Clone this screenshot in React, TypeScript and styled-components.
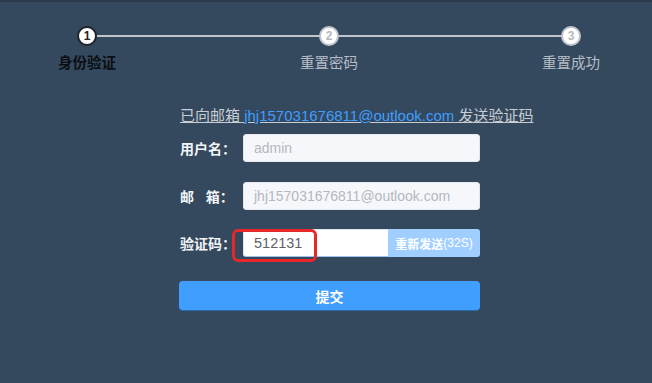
import styled, { createGlobalStyle } from 'styled-components';

const GlobalStyle = createGlobalStyle`
  html, body {
    margin: 0;
    padding: 0;
    background: #34495e;
  }
  * {
    box-sizing: border-box;
  }
`;

const Page = styled.div`
  width: 652px;
  height: 383px;
  background: #34495e;
  border-top: 2px solid #2a3a4b;
  font-family: "Liberation Sans", "Noto Sans CJK SC", sans-serif;
  overflow: hidden;
`;

const Steps = styled.div`
  display: grid;
  grid-template-columns: 60px 1fr 60px 1fr 60px;
  padding: 24px 51px 0 57px;
  align-items: center;
`;

const StepIcon = styled.div<{ $active?: boolean }>`
  justify-self: center;
  width: 20px;
  height: 20px;
  border-radius: 50%;
  background: #fff;
  border: 2px solid ${(p) => (p.$active ? '#1f2329' : '#c0c4cc')};
  color: ${(p) => (p.$active ? '#1f2329' : '#b4b9c1')};
  font-size: 12px;
  font-weight: bold;
  display: flex;
  align-items: center;
  justify-content: center;
  position: relative;
  z-index: 1;
`;

const Connector = styled.div`
  height: 2px;
  background: #c0c4cc;
  margin: 0 -21px;
`;

const StepTitle = styled.div<{ $active?: boolean }>`
  justify-self: center;
  white-space: nowrap;
  margin-top: 8px;
  line-height: 18px;
  font-size: 14.5px;
  font-weight: ${(p) => (p.$active ? 'bold' : 'normal')};
  color: ${(p) => (p.$active ? '#0b0f14' : '#b6bcc6')};
`;

const Form = styled.div`
  width: 301px;
  margin: 34px 0 0 179px;
`;

const Notice = styled.div`
  font-size: 15px;
  line-height: 20px;
  color: #c9cdd3;
  text-decoration: underline;
  white-space: nowrap;
  margin-left: 1px;
`;

const Email = styled.span`
  color: #409eff;
`;

const Row = styled.div<{ $gap: number }>`
  display: flex;
  align-items: center;
  margin-top: ${(p) => p.$gap}px;
  height: 28px;
`;

const Label = styled.label`
  width: 64px;
  padding-left: 1px;
  font-size: 14px;
  font-weight: bold;
  color: #f2f4f7;
  white-space: nowrap;
`;

const Input = styled.div<{ $disabled?: boolean }>`
  flex: 1;
  height: 28px;
  display: flex;
  align-items: center;
  padding-left: 10px;
  font-size: 14px;
  border-radius: 3px;
  border: 1px solid ${(p) => (p.$disabled ? '#e4e7ed' : '#dfe7f1')};
  background: ${(p) => (p.$disabled ? '#f5f7fa' : '#fff')};
  color: ${(p) => (p.$disabled ? '#b4b8bf' : '#606266')};
`;

const Group = styled.div`
  flex: 1;
  display: flex;
  height: 28px;
  position: relative;
`;

const CodeInput = styled(Input)`
  border-radius: 3px 0 0 3px;
  border-right: none;
  border-bottom-color: #9cc3ec;
  font-size: 14.5px;
`;

const Append = styled.div`
  width: 92px;
  display: flex;
  align-items: center;
  justify-content: center;
  background: #a0cfff;
  color: #fff;
  font-size: 12px;
  font-weight: bold;
  border-radius: 0 3px 3px 0;
  white-space: nowrap;
`;

const Countdown = styled.span`
  font-weight: normal;
`;

const Mark = styled.div`
  position: absolute;
  left: -11px;
  top: 0;
  width: 85px;
  height: 33px;
  border: 3px solid #e8272a;
  border-radius: 6px;
  pointer-events: none;
`;

const Submit = styled.button`
  width: 301px;
  height: 29px;
  margin-top: 24px;
  border: none;
  border-radius: 4px;
  background: #409eff;
  box-shadow: 0 1px 0 #2b6aa8;
  color: #fff;
  font-family: inherit;
  font-size: 14px;
  font-weight: bold;
  cursor: pointer;
`;

const steps = [
  { n: 1, title: '身份验证' },
  { n: 2, title: '重置密码' },
  { n: 3, title: '重置成功' },
];

export default function App() {
  return (
    <>
      <GlobalStyle />
      <Page>
        <Steps>
          {steps.map((s, i) => [
            <StepIcon key={'i' + s.n} $active={i === 0}>{s.n}</StepIcon>,
            i < steps.length - 1 && <Connector key={'c' + s.n} />,
          ])}
          {steps.map((s, i) => [
            <StepTitle key={'t' + s.n} $active={i === 0}>{s.title}</StepTitle>,
            i < steps.length - 1 && <div key={'s' + s.n} />,
          ])}
        </Steps>

        <Form>
          <Notice>
            已向邮箱 <Email>jhj157031676811@outlook.com</Email> 发送验证码
          </Notice>
          <Row $gap={8}>
            <Label>用户名：</Label>
            <Input $disabled>admin</Input>
          </Row>
          <Row $gap={20}>
            <Label>邮&nbsp;&nbsp;&nbsp;箱：</Label>
            <Input $disabled>jhj157031676811@outlook.com</Input>
          </Row>
          <Row $gap={19}>
            <Label>验证码：</Label>
            <Group>
              <CodeInput>512131</CodeInput>
              <Append>
                重新发送<Countdown>(32S)</Countdown>
              </Append>
              <Mark />
            </Group>
          </Row>
          <Submit>提交</Submit>
        </Form>
      </Page>
    </>
  );
}
